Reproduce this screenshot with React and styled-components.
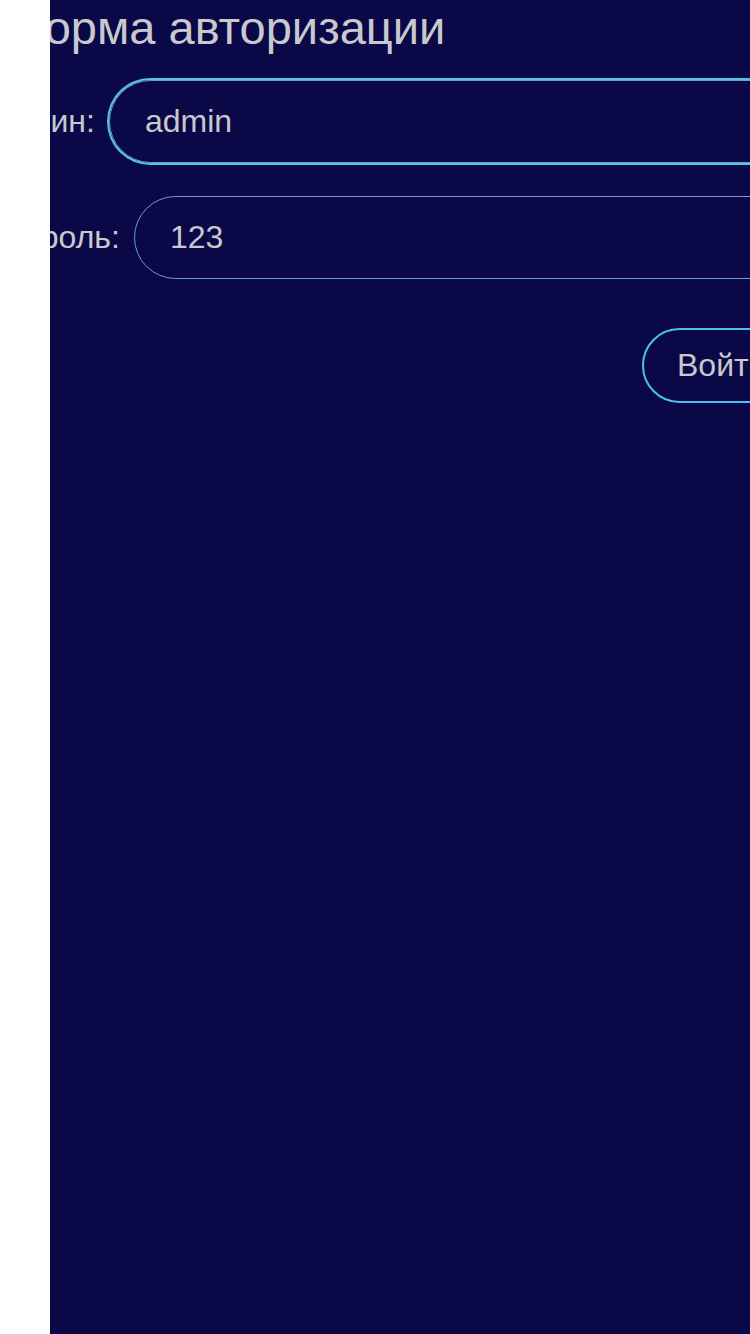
import React from "react";
import styled, { createGlobalStyle } from "styled-components";

const GlobalStyle = createGlobalStyle`
  html, body { margin: 0; padding: 0; background: #ffffff; }
  body { font-family: "Liberation Sans", Arial, sans-serif; }
  * { box-sizing: border-box; }
`;

const Page = styled.div`
  display: flex;
  width: 750px;
  height: 1334px;
  overflow: hidden;
`;

const Gutter = styled.aside`
  flex: 0 0 50px;
  background: #ffffff;
`;

const Main = styled.main`
  flex: 1;
  min-width: 0;
  background: #0a0846;
  overflow: hidden;
`;

const Content = styled.div`
  margin-left: -50px;
  width: 1000px;
  display: flex;
  flex-direction: column;
`;

const Title = styled.h1`
  margin: 0 0 0 9px;
  font-size: 47px;
  line-height: 55px;
  font-weight: 400;
  color: #c8c8ce;
  white-space: nowrap;
`;

const Form = styled.form`
  display: flex;
  flex-direction: column;
  margin-top: 25px;
`;

const Row = styled.div`
  display: flex;
  align-items: center;
  gap: 14px;
  margin-bottom: ${(p) => p.$gap}px;
`;

const Label = styled.label`
  font-size: 32px;
  color: #c8c8ce;
  white-space: nowrap;
`;

const Input = styled.input`
  width: 700px;
  height: 83px;
  padding: 0 35px;
  border: 1px solid #6ba2bb;
  border-radius: 42px;
  background: transparent;
  color: #c8c8ce;
  font-family: "Liberation Sans", Arial, sans-serif;
  font-size: 32px;
  outline: none;
  box-shadow: ${(p) => (p.$focused ? "0 0 0 2px #56c4ea" : "none")};
`;

const ButtonRow = styled.div`
  display: flex;
  padding-left: 642px;
`;

const Button = styled.button`
  height: 75px;
  padding: 0 33px;
  border: 2px solid #4cc2ec;
  border-radius: 38px;
  background: transparent;
  color: #c8c8ce;
  font-family: "Liberation Sans", Arial, sans-serif;
  font-size: 32px;
  white-space: nowrap;
  cursor: pointer;
`;

export default function App() {
  return (
    <>
      <GlobalStyle />
      <Page>
        <Gutter />
        <Main>
          <Content>
            <Title>Форма авторизации</Title>
            <Form onSubmit={(e) => e.preventDefault()}>
              <Row $gap={33}>
                <Label htmlFor="login">Логин:</Label>
                <Input id="login" defaultValue="admin" $focused />
              </Row>
              <Row $gap={49}>
                <Label htmlFor="password">Пароль:</Label>
                <Input id="password" defaultValue="123" />
              </Row>
              <ButtonRow>
                <Button type="submit">Войти</Button>
              </ButtonRow>
            </Form>
          </Content>
        </Main>
      </Page>
    </>
  );
}
